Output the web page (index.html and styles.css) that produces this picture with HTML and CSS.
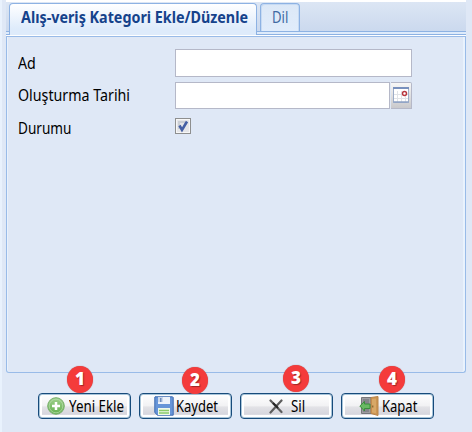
FILE: index.html
```html
<!DOCTYPE html>
<html lang="tr">
<head>
<meta charset="utf-8">
<title>Alış-veriş Kategori</title>
<link rel="stylesheet" href="styles.css">
</head>
<body>
<main class="window">
  <nav class="tabs">
    <span class="tab-edge"></span>
    <a class="tab active"><span class="t-title">Alış-veriş Kategori Ekle/Düzenle</span></a>
    <a class="tab other"><span class="t-dil">Dil</span></a>
  </nav>
  <div class="strip"></div>
  <section class="panel">
    <div class="row name"><label><span class="t-ad">Ad</span></label><span class="input"></span></div>
    <div class="row date"><label><span class="t-date">Oluşturma Tarihi</span></label><span class="input"></span><span class="trigger">
      <svg width="16" height="16" viewBox="0 0 16 16"><rect x=".5" y=".5" width="15" height="15" rx="1" fill="#fff" stroke="#9cacc8"/><path d="M4.5 4v11M8.5 4v11M12.5 4v11M1 7.500h14M1 11.500h14" stroke="#e0e3e8"/><path d="M0 0h16v2H0z" fill="#7890bd"/><path d="M0 15h16" stroke="#8ea2c5" stroke-width="1.500"/><circle cx="11.500" cy="6.500" r="2" fill="#fff" stroke="#b83840" stroke-width="1.500"/></svg></span></div>
    <div class="row status"><label><span class="t-status">Durumu</span></label><span class="check">
      <svg width="14" height="14" viewBox="0 0 14 14"><path d="M2 2h7v2H4v6H2z" fill="#cbcfd5"/><path d="M3.500 6.500 6 11 11 2.500" fill="none" stroke="#4560a5" stroke-width="2.600"/></svg></span></div>
  </section>
  <footer class="buttons">
    <button class="b1"><svg width="18" height="18" viewBox="0 0 18 18"><defs><linearGradient id="g" x2="0" y2="1"><stop stop-color="#a1d18e"/><stop offset="1" stop-color="#62b04e"/></linearGradient></defs><circle cx="9" cy="9" r="8.300" fill="url(#g)" stroke="#79af6c"/><circle cx="9" cy="9" r="6.800" fill="none" stroke="#b9dcad" stroke-width=".7"/><path d="M9 5v8M5 9h8" stroke="#fff" stroke-width="2.500"/></svg><span class="t-new">Yeni Ekle</span><i class="badge"><b>1</b></i></button>
    <button class="b2"><svg width="20" height="20" viewBox="0 0 20 20"><path d="M1 .8h17.500l.7.700v17.700H3.500L.8 16.500V1z" fill="#6795d8" stroke="#3e6bb0"/><path d="M4 1h12v7H4z" fill="#edf2fa"/><path d="M4 1h5v5H4z" fill="#cbd7eb"/><path d="M6 2h1.500v4H6z" fill="#6e8cbb"/><path d="M4 12h12v7H4z" fill="#eff8ea"/><path d="M5 14.500h10M5 17h10" stroke="#8bca69" stroke-width="1.600"/></svg><span class="t-save">Kaydet</span><i class="badge"><b>2</b></i></button>
    <button class="b3"><svg width="14" height="15" viewBox="0 0 14 15"><path d="M1.500 1.500 12.500 13M12.500 1.500 1.500 13.500" fill="none" stroke="#5c5c5c" stroke-width="2.200" stroke-linecap="round"/><path d="M4 4l5 5" stroke="#252525" stroke-width="2"/></svg><span class="t-del">Sil</span><i class="badge"><b>3</b></i></button>
    <button class="b4"><svg width="20" height="20" viewBox="0 0 20 20"><path d="M2.500 1.500H12v16H2.500z" fill="#9d9da0" stroke="#77777b"/><path d="M4 3h6v13H4z" fill="#85858a"/><path d="M12 1.500 19 .5v19l-7-2z" fill="#cc9552" stroke="#b98449"/><path d="M13 3l4-.5v14.800l-4-.8z" fill="#d8a867"/><path d="M13.800 9.500v2" stroke="#765022"/><path d="M.8 10 5.500 5.500V8H11v4.500H5.500V15z" fill="#69b963" stroke="#348c38" stroke-width=".9"/></svg><span class="t-close">Kapat</span><i class="badge"><b>4</b></i></button>
  </footer>
</main>
</body>
</html>
```
FILE: styles.css
```css
* { box-sizing: border-box; }
body { margin: 0; width: 472px; height: 432px; overflow: hidden; background: #dfe8f6; font: 16px/20px "Noto Sans", sans-serif; color: #000; }
.window { height: 432px; padding: 2px 5px 0 6px; background: linear-gradient(#fff, #fff) 6px 0 / 460px 2px no-repeat, linear-gradient(90deg, #e9f2fd 2px, #dfe8f6 2px); }
.tabs { display: flex; height: 30px; width: 460px; background: linear-gradient(#dce6f4, #cbd9ee); border-bottom: 1px solid #8db2e3; }
.tab-edge { width: 3px; }
.tab { display: flex; justify-content: flex-start; border: 1px solid #8db2e3; border-radius: 4px 4px 0 0; white-space: nowrap; }
.active { width: 248px; height: 32px; margin-top: 1px; border-bottom: 0; color: #15428b; font-weight: 700; background: linear-gradient(#fff, #deebfb 80%); padding: 3px 0 0 11px; }
.other { width: 40px; height: 28px; margin: 1px 0 0 3px; border-bottom: 0; color: #416aa3; background: linear-gradient(#dce8f7, #e0ecfb); box-shadow: inset 1px 1px #c6daf3, inset -1px 0 #c6daf3; padding: 3px 0 0 11px; }
.strip { height: 5px; width: 460px; background: linear-gradient(#deebfb 2px, #8db2e3 2px 3px, #fff 3px 4px, #99bbe8 4px); }
.panel { height: 336px; width: 460px; border: 1px solid #99bbe8; border-top: 0; border-radius: 0 0 3px 3px; box-shadow: inset 1px 0 #e9f2fd, inset -2px 0 #e9f2fd; padding: 12px 0 0 11px; }
.row { display: flex; align-items: flex-start; }
.row label { width: 157px; padding-top: 4px; white-space: nowrap; }
.name { height: 33px; }
.date { height: 36px; }
.date label { padding-top: 3px; }
.status label { padding-top: 0; }
.input { width: 237px; height: 28px; background: #fff; border: 1px solid #b5b8c8; }
.date .input { width: 215px; height: 27px; }
.trigger { width: 21px; height: 27px; margin-left: 1px; border: 1px solid #b5b8c8; border-left: 0; border-radius: 0 2px 0 0; background: linear-gradient(#f7f7f7, #c9c9cc); padding: 4px 0 0 2px; }
svg { display: block; flex: none; }
.check { width: 16px; height: 16px; border: 1px solid #8e8f8f; background: #e5e6e9; box-shadow: inset 0 0 0 1px #f7f7f7; }
.buttons { display: flex; gap: 8px; padding: 20px 0 0 32px; }
button { display: flex; align-items: center; position: relative; width: 93px; height: 26px; padding: 0 0 0 9px; border: 1px solid #174b7b; border-radius: 4px; background: linear-gradient(#fff 0, #f2f2f4 48%, #e2e2e6 55%, #d6d6de 85%, #fff 88%); box-shadow: inset 0 0 0 1px #a8c5da, inset 3px 0 #fff, inset -3px 0 #fff; font: inherit; font-size: 15.5px; color: #000; white-space: nowrap; }
button > span { margin-top: -1px; }
[class^="t-"] { display: inline-block; transform-origin: 0 50%; }
.t-title { transform: scaleX(.895); }
.t-dil { transform: scaleX(.82); }
.t-ad { transform: scaleX(.89); }
.t-date { transform: scaleX(.89); }
.t-status { transform: scaleX(.85); }
.t-new { transform: scaleX(.86); }
.t-save { transform: scaleX(.84); }
.t-del { transform: scaleX(.86); }
.t-close { transform: scaleX(.84); }
.b1 { padding-left: 8px; } .b1 > span { margin-left: 4px; }
.b2 { padding-left: 14px; } .b2 > span { margin-left: 2px; }
.b3 { padding-left: 28px; } .b3 > span { margin-left: 8px; }
.b4 { padding-left: 17px; } .b4 > span { margin-left: 3px; }
.badge { position: absolute; left: 28px; top: -28px; display: flex; width: 26px; height: 27px; border-radius: 50%; background: #f43b3b; color: #fff; justify-content: center; align-items: center; font: 700 17px/20px "Open Sans", sans-serif; box-shadow: 0 0 1px #9b6869; }
.badge b { text-shadow: 1px 1px 1px #a02525; margin-top: -1px; }
.b2 .badge { left: 42px; top: -27px; }
.b3 .badge { left: 42px; top: -29px; }
.b4 .badge { left: 37px; }
```
